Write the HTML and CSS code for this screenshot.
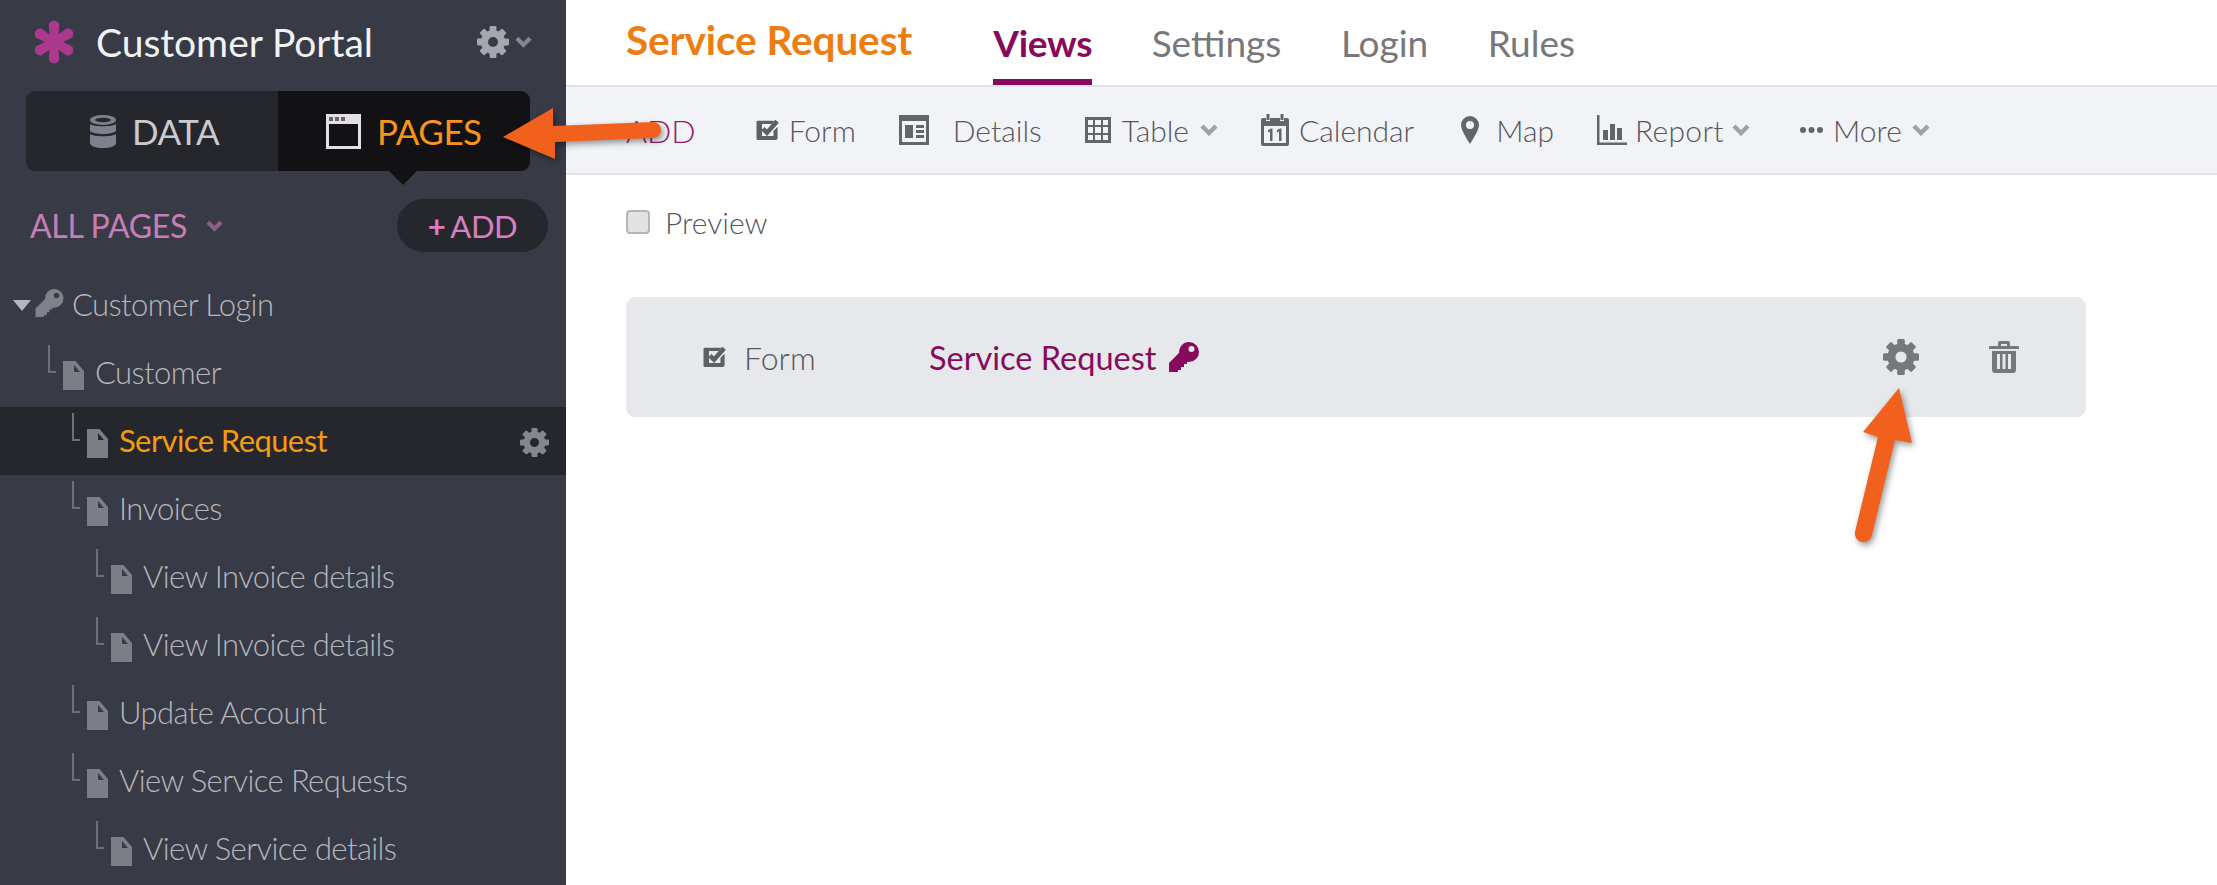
FILE: index.html
```html
<!DOCTYPE html>
<html lang="en">
<head>
<meta charset="utf-8">
<title>Customer Portal</title>
<link rel="stylesheet" href="styles.css">
</head>
<body>
<svg class="defs" width="0" height="0" aria-hidden="true">
  <symbol id="gear" viewBox="0 0 36 36">
    <circle cx="18" cy="18" r="9.6" fill="none" stroke="currentColor" stroke-width="8"/>
    <g fill="currentColor">
      <rect x="14.2" y="0" width="7.6" height="8" rx="1.5"/>
      <rect x="14.2" y="0" width="7.6" height="8" rx="1.5" transform="rotate(45 18 18)"/>
      <rect x="14.2" y="0" width="7.6" height="8" rx="1.5" transform="rotate(90 18 18)"/>
      <rect x="14.2" y="0" width="7.6" height="8" rx="1.5" transform="rotate(135 18 18)"/>
      <rect x="14.2" y="0" width="7.6" height="8" rx="1.5" transform="rotate(180 18 18)"/>
      <rect x="14.2" y="0" width="7.6" height="8" rx="1.5" transform="rotate(225 18 18)"/>
      <rect x="14.2" y="0" width="7.6" height="8" rx="1.5" transform="rotate(270 18 18)"/>
      <rect x="14.2" y="0" width="7.6" height="8" rx="1.5" transform="rotate(315 18 18)"/>
    </g>
  </symbol>
  <symbol id="key" viewBox="0 0 30 30">
    <path fill="currentColor" fill-rule="evenodd" d="M20 0a10 10 0 0 1 0 20c-.7 0-1.400-.1-2-.2V22h-3v3h-3v3H9v2H0v-9L10.200 10.800A10 10 0 0 1 20 0zM22.500 4a3 3 0 1 0 0 6 3 3 0 0 0 0-6z"/>
  </symbol>
  <symbol id="page" viewBox="0 0 21 29">
    <path fill="currentColor" fill-rule="evenodd" d="M0 0h12.500L21 10v19H0zM11 4v7h6z"/>
  </symbol>
  <symbol id="chev" viewBox="0 0 18 12">
    <path fill="none" stroke="currentColor" stroke-width="4.400" d="M2 2l7 7 7-7"/>
  </symbol>
  <symbol id="check" viewBox="0 0 24 24">
    <path fill="currentColor" fill-rule="evenodd" d="M1.500 2h18l-3 3.500H6v13h12.500V13L23 8.500V21a2 2 0 0 1-2 2H1.500A1.500 1.500 0 0 1 0 21.500v-18A1.500 1.500 0 0 1 1.500 2z"/>
    <path fill="none" stroke="currentColor" stroke-width="5" d="M7 10.500l4.500 4.500L22.500 2.500"/>
  </symbol>
</svg>

<div class="app">
  <aside class="sidebar">
    <header class="brand">
      <svg class="logo" viewBox="-24 -24 48 48" aria-hidden="true">
        <g fill="#ab3a8e">
          <path d="M-4 0L-5.500-19Q0-26 5.500-19L4 0z"/>
          <path d="M-4 0L-5.500-19Q0-26 5.500-19L4 0z" transform="rotate(60)"/>
          <path d="M-4 0L-5.500-19Q0-26 5.500-19L4 0z" transform="rotate(120)"/>
          <path d="M-4 0L-5.500-19Q0-26 5.500-19L4 0z" transform="rotate(180)"/>
          <path d="M-4 0L-5.500-19Q0-26 5.500-19L4 0z" transform="rotate(240)"/>
          <path d="M-4 0L-5.500-19Q0-26 5.500-19L4 0z" transform="rotate(300)"/>
        </g>
      </svg>
      <span class="brand-name">Customer Portal</span>
      <span class="brand-menu">
        <svg class="ico-gear-top"><use href="#gear"/></svg>
        <svg class="ico-chev"><use href="#chev"/></svg>
      </span>
    </header>

    <nav class="switch">
      <a class="switch-tab switch-data">
        <svg class="ico-db" viewBox="0 0 26 33" aria-hidden="true">
          <ellipse cx="13" cy="5" rx="13" ry="5" fill="#7c818c"/>
          <ellipse cx="13" cy="5" rx="8" ry="2.200" fill="#26272c"/>
          <path fill="#7c818c" d="M0 9c3 3 23 3 26 0v7c-3 4-23 4-26 0zM0 19c3 3 23 3 26 0v9c0 3-6 5-13 5S0 31 0 28z"/>
        </svg>
        DATA
      </a>
      <a class="switch-tab switch-pages">
        <svg class="ico-win" viewBox="0 0 35 35" aria-hidden="true">
          <path fill="#e4dfe2" fill-rule="evenodd" d="M0 0h35v35H0zM3 10v22h29V10z"/>
          <path fill="#121214" d="M3 3h4v4H3zM9 3h4v4H9zM15 3h4v4h-4z" opacity=".6"/>
        </svg>
        PAGES
      </a>
    </nav>

    <div class="pages-head">
      <span class="all-pages">ALL PAGES <svg class="ico-chev ico-chev-pink"><use href="#chev"/></svg></span>
      <button class="add-btn" type="button"><b>+</b>ADD</button>
    </div>

    <ul class="tree">
      <li class="row row-root">
        <span class="caret"></span>
        <svg class="ico-key-side"><use href="#key"/></svg>
        <span class="row-label">Customer Login</span>
      </li>
      <li class="row lvl-1"><span class="elbow"></span><svg class="ico-page"><use href="#page"/></svg><span class="row-label">Customer</span></li>
      <li class="row lvl-2 row-active"><span class="elbow"></span><svg class="ico-page"><use href="#page"/></svg><span class="row-label">Service Request</span><svg class="ico-gear-row"><use href="#gear"/></svg></li>
      <li class="row lvl-2"><span class="elbow"></span><svg class="ico-page"><use href="#page"/></svg><span class="row-label">Invoices</span></li>
      <li class="row lvl-3"><span class="elbow"></span><svg class="ico-page"><use href="#page"/></svg><span class="row-label">View Invoice details</span></li>
      <li class="row lvl-3"><span class="elbow"></span><svg class="ico-page"><use href="#page"/></svg><span class="row-label">View Invoice details</span></li>
      <li class="row lvl-2"><span class="elbow"></span><svg class="ico-page"><use href="#page"/></svg><span class="row-label">Update Account</span></li>
      <li class="row lvl-2"><span class="elbow"></span><svg class="ico-page"><use href="#page"/></svg><span class="row-label">View Service Requests</span></li>
      <li class="row lvl-3"><span class="elbow"></span><svg class="ico-page"><use href="#page"/></svg><span class="row-label">View Service details</span></li>
    </ul>
  </aside>

  <main class="main">
    <header class="topbar">
      <h1 class="page-title">Service Request</h1>
      <nav class="tabs">
        <a class="tab tab-active">Views</a>
        <a class="tab">Settings</a>
        <a class="tab">Login</a>
        <a class="tab">Rules</a>
      </nav>
    </header>

    <div class="toolbar">
      <span class="tool-add">ADD</span>
      <a class="tool"><svg class="ico-check"><use href="#check"/></svg>Form</a>
      <a class="tool tool-details">
        <svg class="ico-details" viewBox="0 0 30 30" aria-hidden="true">
          <path fill="#63656b" fill-rule="evenodd" d="M0 0h30v30H0zM3 6v21h24V6z"/>
          <path fill="#63656b" d="M6 10h8v13H6zM17 10h8v3h-8zM17 15h8v3h-8zM17 20h8v3h-8z"/>
        </svg>
        Details
      </a>
      <a class="tool tool-table">
        <svg class="ico-table" viewBox="0 0 26 26" aria-hidden="true">
          <path fill="#63656b" fill-rule="evenodd" d="M0 0h26v26H0zM3 3v5h5V3zM10 3v5h6V3zM18 3v5h5V3zM3 10v6h5v-6zM10 10v6h6v-6zM18 10v6h5v-6zM3 18v5h5v-5zM10 18v5h6v-5zM18 18v5h5v-5z"/>
        </svg>
        Table
        <svg class="ico-chev ico-chev-tool"><use href="#chev"/></svg>
      </a>
      <a class="tool">
        <svg class="ico-cal" viewBox="0 0 28 32" aria-hidden="true">
          <path fill="#63656b" fill-rule="evenodd" d="M2 4h3v3h4V4h10v3h4V4h3a2 2 0 0 1 2 2v24a2 2 0 0 1-2 2H2a2 2 0 0 1-2-2V6a2 2 0 0 1 2-2zM3 12v17h22V12z"/>
          <path fill="#63656b" d="M5.500 0h3v6h-3zM19.500 0h3v6h-3zM7 16l3-1.500h1.500V27H9V17.500L7 18.500zM16 16l3-1.500h1.500V27H18V17.500l-2 1z"/>
        </svg>
        Calendar
      </a>
      <a class="tool tool-map">
        <svg class="ico-pin" viewBox="0 0 18 28" aria-hidden="true">
          <path fill="#63656b" fill-rule="evenodd" d="M9 0a9 9 0 0 1 9 9c0 5-6 14-9 19C6 23 0 14 0 9a9 9 0 0 1 9-9zM9 5a4 4 0 1 0 0 8 4 4 0 0 0 0-8z"/>
        </svg>
        Map
      </a>
      <a class="tool tool-report">
        <svg class="ico-report" viewBox="0 0 30 30" aria-hidden="true">
          <path fill="#63656b" d="M0 0h2.500v27.500H30V30H0zM6 15h5v10H6zM13 9h5v16h-5zM20 13h5v12h-5z"/>
        </svg>
        Report
        <svg class="ico-chev ico-chev-tool"><use href="#chev"/></svg>
      </a>
      <a class="tool tool-more">
        <svg class="ico-dots" viewBox="0 0 23 6" aria-hidden="true">
          <g fill="#63656b"><circle cx="3" cy="3" r="3"/><circle cx="11.500" cy="3" r="3"/><circle cx="20" cy="3" r="3"/></g>
        </svg>
        More
        <svg class="ico-chev ico-chev-tool"><use href="#chev"/></svg>
      </a>
    </div>

    <label class="preview"><span class="checkbox"></span>Preview</label>

    <section class="view-card">
      <span class="view-type"><svg class="ico-check"><use href="#check"/></svg>Form</span>
      <span class="view-name">Service Request<svg class="ico-key-card"><use href="#key"/></svg></span>
      <span class="view-actions">
        <svg class="ico-gear-card"><use href="#gear"/></svg>
        <svg class="ico-trash" viewBox="0 0 30 32" aria-hidden="true">
          <path fill="#75787d" fill-rule="evenodd" d="M0 5h9V2a2 2 0 0 1 2-2h8a2 2 0 0 1 2 2v3h9v3H0zM12 3v2h6V3zM3 10h24v19a3 3 0 0 1-3 3H6a3 3 0 0 1-3-3zM8 13v15h3V13zM13.500 13v15h3V13zM19 13v15h3V13z"/>
        </svg>
      </span>
    </section>
  </main>

  <svg class="arrows" viewBox="0 0 2217 885" aria-hidden="true">
    <path d="M503 137L553 108L553 126L653 122A8 8 0 0 1 653 138L555 142L555 159Z"/>
    <path d="M1899 388L1912 443L1895 440L1872 535A8.500 8.500 0 0 1 1855 532L1878 437L1863 432Z"/>
  </svg>
</div>
</body>
</html>
```

FILE: styles.css
```css
* { box-sizing: border-box; }
html, body { margin: 0; padding: 0; height: 100%; }
body { font-family: Lato, "Liberation Sans", sans-serif; background: #fff; overflow: hidden; }
.defs { position: absolute; }
svg { display: block; flex: none; }

.app { position: relative; display: flex; width: 2217px; height: 885px; overflow: hidden; }
.arrows { position: absolute; inset: 0; width: 2217px; height: 885px; pointer-events: none; fill: #f1601c; filter: drop-shadow(2px 3px 3px rgba(0,0,0,.4)); }

/* Sidebar */
.sidebar { width: 566px; flex: none; background: #383b45; display: flex; flex-direction: column; height: 885px; overflow: hidden; }
.brand { height: 91px; display: flex; align-items: center; padding: 0 34px 7px 31px; }
.logo { width: 46px; height: 48px; }
.brand-name { margin-left: 19px; font-size: 39px; color: #f0f2f4; flex: 1; letter-spacing: -.05px; }
.brand-menu { display: flex; align-items: center; gap: 6px; color: #a4a7ad; }
.ico-gear-top { width: 32px; height: 32px; }
.ico-chev { width: 17px; height: 12px; color: #85868f; }

.switch { position: relative; display: flex; height: 80px; margin: 0 36px 0 26px; border-radius: 9px; overflow: visible; }
.switch::after { content: ""; position: absolute; left: 363px; top: 80px; border: 14px solid transparent; border-top-color: #121214; border-bottom: 0; }
.switch-tab { display: flex; align-items: center; font-size: 35px; letter-spacing: -.5px; }
.switch-data { width: 252px; background: #26272c; color: #c9cbd0; border-radius: 9px 0 0 9px; padding-left: 64px; gap: 16px; }
.switch-pages { flex: 1; background: #121214; color: #f7941d; border-radius: 0 9px 9px 0; padding-left: 48px; gap: 16px; }
.ico-db { width: 26px; height: 33px; }
.ico-win { width: 35px; height: 35px; }

.pages-head { display: flex; align-items: center; justify-content: space-between; margin-top: 28px; padding: 0 18px 0 30px; height: 53px; }
.all-pages { display: flex; align-items: center; gap: 19px; font-size: 32px; letter-spacing: -.3px; color: #c67fb6; }
.ico-chev-pink { color: #8a6186; }
.add-btn { width: 151px; height: 53px; border: 0; border-radius: 27px; background: #26272c; color: #d880bf; font: 400 31px Lato, sans-serif; letter-spacing: -.4px; padding: 0; }
.add-btn b { font-weight: 700; margin-right: 5px; }

.tree { list-style: none; margin: 19px 0 0; padding: 0; }
.row { height: 68px; display: flex; align-items: center; position: relative; font-size: 31px; letter-spacing: -.6px; font-weight: 300; color: #b5b7bd; }
.row-label { margin-left: 11px; margin-top: -3px; }
.lvl-1 { padding-left: 63px; }
.lvl-2 { padding-left: 87px; }
.lvl-3 { padding-left: 111px; }
.row-root { padding-left: 13px; }
.row-root .row-label { margin-left: 8px; }
.caret { width: 0; height: 0; border: 9px solid transparent; border-top: 11px solid #b5b7bd; border-bottom: 0; margin-right: 4px; }
.ico-key-side { width: 29px; height: 28px; color: #80828a; margin-top: -4px; }
.ico-page { width: 21px; height: 29px; color: #7c7e86; margin-top: 5px; }
.elbow { position: absolute; top: 6px; width: 8px; height: 28px; border-left: 2px solid #6e7078; border-bottom: 2px solid #6e7078; }
.lvl-1 .elbow { left: 48px; }
.lvl-2 .elbow { left: 72px; }
.lvl-3 .elbow { left: 96px; }
.row-active { background: #26272c; color: #f39c12; font-weight: 400; }
.ico-gear-row { position: absolute; right: 17px; top: 21px; width: 29px; height: 29px; color: #85878f; }

/* Main */
.main { flex: 1; display: flex; flex-direction: column; min-width: 0; }
.topbar { height: 85px; display: flex; padding-left: 60px; }
.page-title { margin: 0; font-size: 40.5px; letter-spacing: -.1px; font-weight: 700; color: #ee7d11; line-height: 80px; }
.tabs { display: flex; margin-left: 81px; gap: 59.5px; }
.tab { font-size: 37px; color: #77787c; line-height: 86px; height: 85px; }
.tab-active { color: #860b5c; font-weight: 700; border-bottom: 6px solid #860b5c; letter-spacing: -.3px; }

.toolbar { height: 90px; background: #f2f3f7; border-top: 2px solid #e2e2e8; border-bottom: 2px solid #e2e2e8; display: flex; align-items: center; gap: 43px; padding-left: 60px; font-size: 30px; font-weight: 300; color: #55575c; }
.tool-add { color: #96196e; margin-right: 17px; font-size: 32px; }
.tool { display: flex; align-items: center; gap: 10px; }
.tool-details { gap: 24px; }
.tool-table { gap: 11px; }
.tool-map { margin-left: 4px; gap: 17px; }
.tool-report { gap: 8px; letter-spacing: .3px; }
.tool-more { margin-left: 7px; }
.ico-check { width: 23px; height: 22px; color: #5e6066; }
.ico-details { width: 30px; height: 30px; }
.ico-table { width: 26px; height: 26px; }
.ico-cal { width: 28px; height: 32px; }
.ico-pin { width: 18px; height: 28px; }
.ico-report { width: 30px; height: 30px; }
.ico-dots { width: 23px; height: 6px; }
.ico-chev-tool { color: #a0a2a8; width: 18px; }

.preview { display: flex; align-items: center; margin: 32px 0 0 60px; height: 30px; font-size: 30px; font-weight: 300; color: #55575c; gap: 15px; }
.checkbox { width: 24px; height: 24px; border-radius: 4px; background: #e2e2e2; border: 2px solid #b5b5b5; }

.view-card { display: flex; align-items: center; width: 1460px; height: 120px; margin: 60px 0 0 60px; border-radius: 9px; background: #e6e8ec; padding-left: 77px; }
.view-type { display: flex; align-items: center; gap: 18px; font-size: 32px; font-weight: 300; color: #55575c; width: 226px; }
.view-name { display: flex; align-items: center; gap: 13px; font-size: 32.5px; color: #860b5c; flex: 1; }
.ico-key-card { width: 30px; height: 30px; }
.view-actions { display: flex; align-items: center; gap: 70px; margin-right: 67px; color: #75787d; }
.ico-gear-card { width: 36px; height: 36px; }
.ico-trash { width: 30px; height: 32px; }
```
